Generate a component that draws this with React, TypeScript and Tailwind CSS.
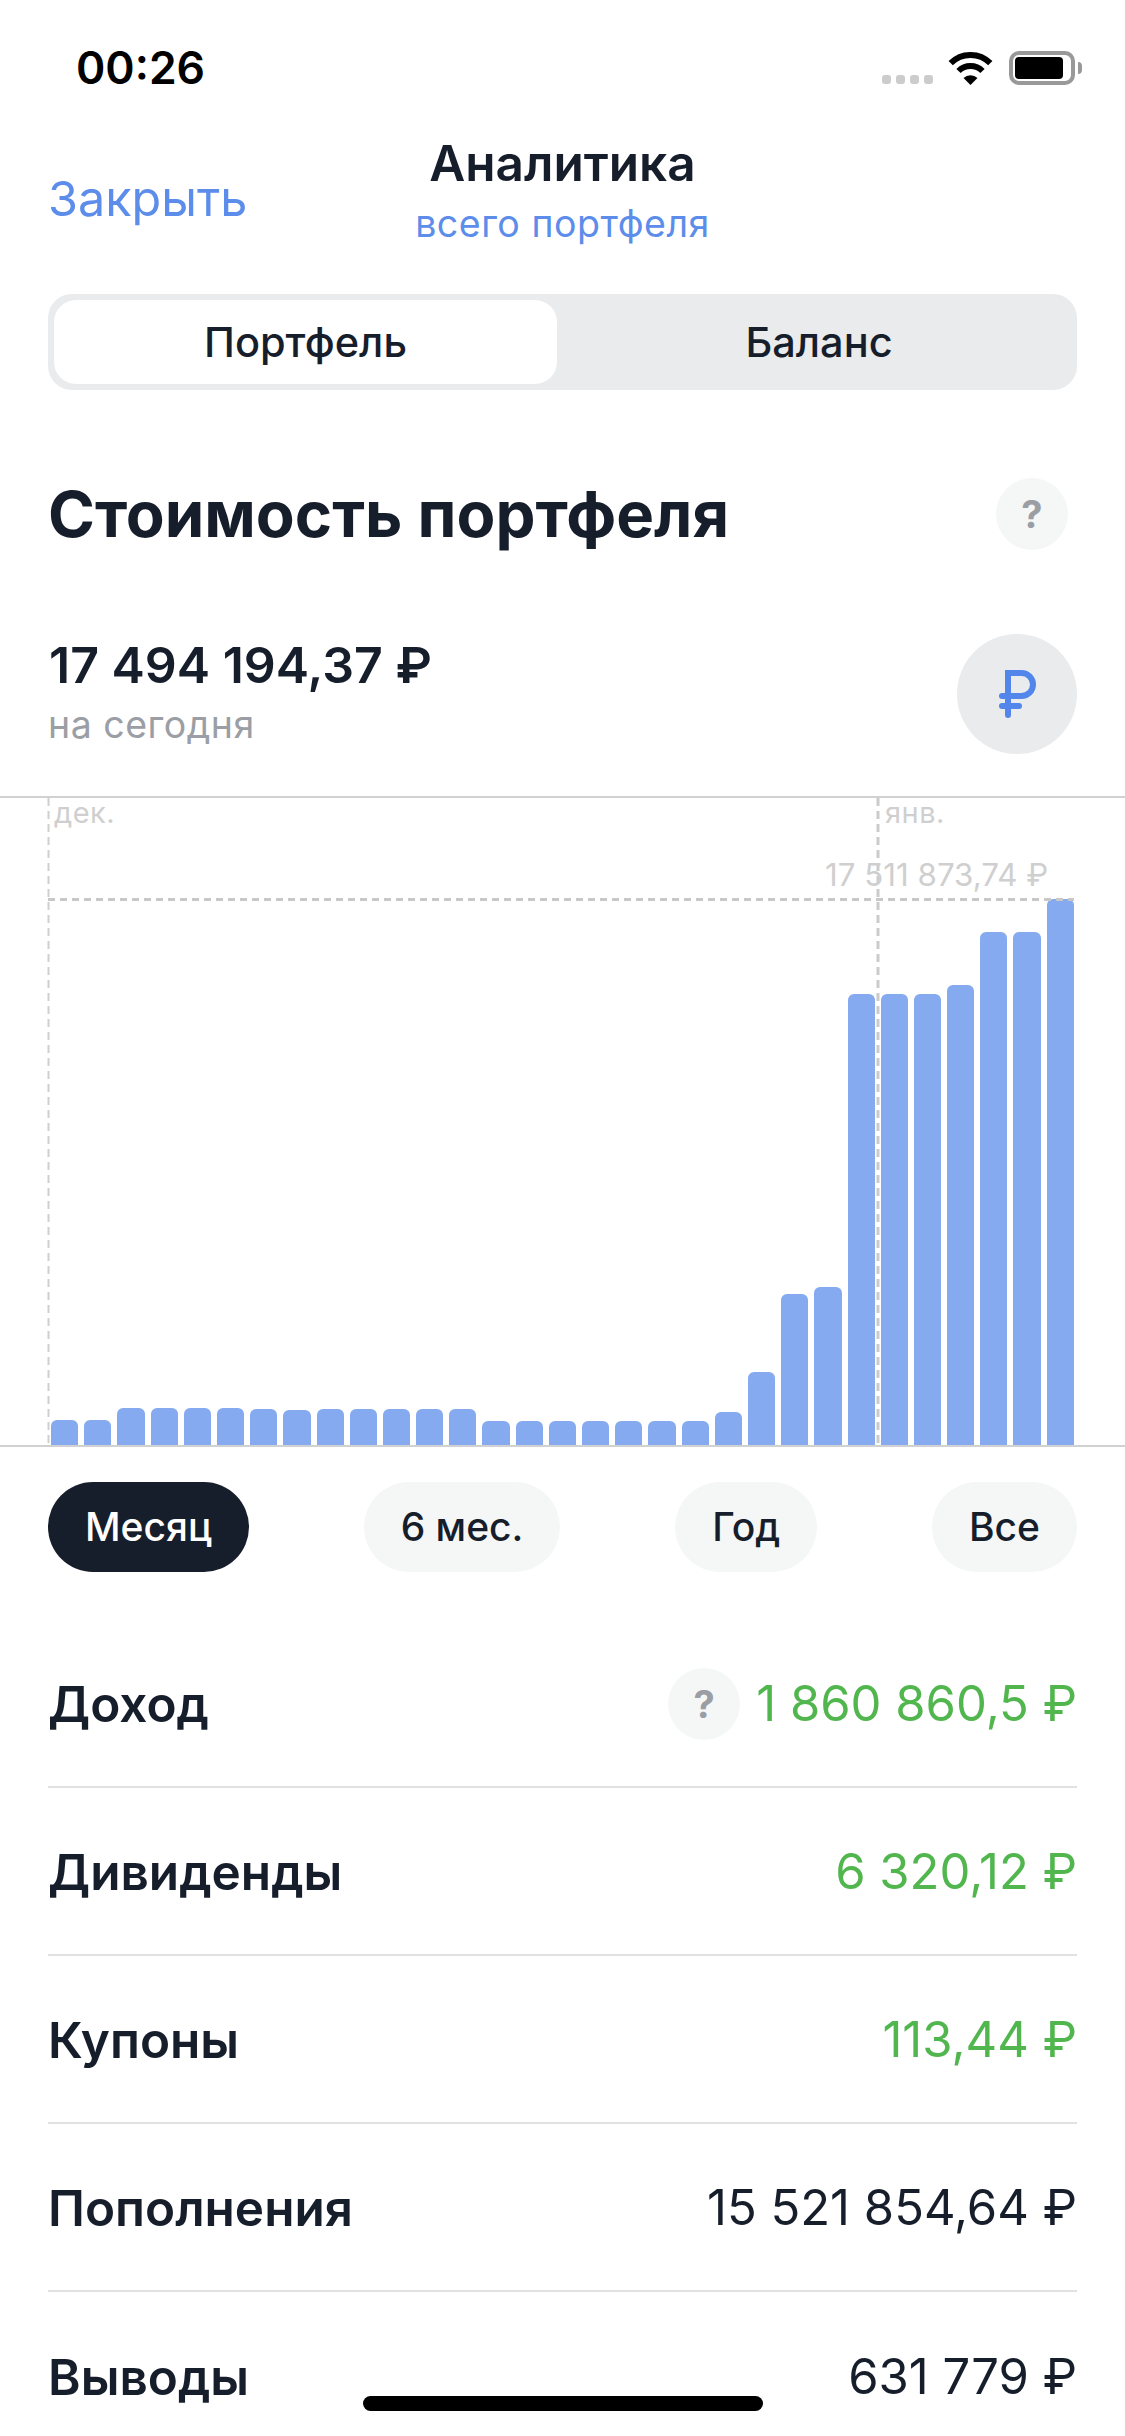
import React from "react";

const barHeights = [
  25, 25, 37, 37, 37, 37, 36, 35, 36, 36, 36, 36, 36, 24, 24, 24, 24, 24, 24,
  24, 33, 73, 151, 158, 451, 451, 451, 460, 513, 513, 546,
];

const ranges = [
  { label: "Месяц", active: true },
  { label: "6 мес.", active: false },
  { label: "Год", active: false },
  { label: "Все", active: false },
];

const rows = [
  { label: "Доход", value: "1 860 860,5 ₽", green: true, help: true },
  { label: "Дивиденды", value: "6 320,12 ₽", green: true, help: false },
  { label: "Купоны", value: "113,44 ₽", green: true, help: false },
  { label: "Пополнения", value: "15 521 854,64 ₽", green: false, help: false },
  { label: "Выводы", value: "631 779 ₽", green: false, help: false },
];

function HelpButton() {
  return (
    <div className="flex h-[72px] w-[72px] items-center justify-center rounded-full bg-[#f5f7f7] text-[38px] font-bold text-[#9b9ea5]">
      ?
    </div>
  );
}

function RubleIcon() {
  return (
    <svg width="44" height="56" viewBox="0 0 44 56" fill="none" stroke="#5286ea" strokeWidth="6" strokeLinecap="round">
      <path d="M13 49V7H26.500A11.500 11.500 0 0 1 26.500 30H7" />
      <path d="M7 40H24" />
    </svg>
  );
}

function StatusIcons() {
  return (
    <div className="flex items-end">
      <div className="flex gap-[5px] pb-[1px]">
        <div className="h-[9px] w-[9px] rounded-[3px] bg-[#cccccc]" />
        <div className="h-[9px] w-[9px] rounded-[3px] bg-[#cccccc]" />
        <div className="h-[9px] w-[9px] rounded-[3px] bg-[#cccccc]" />
        <div className="h-[9px] w-[9px] rounded-[3px] bg-[#cccccc]" />
      </div>
      <svg width="45" height="33" viewBox="0 0 45 33" className="ml-[15px]">
        <path d="M2.7 11.2A28 28 0 0 1 42.3 11.2" fill="none" stroke="#000" strokeWidth="6" />
        <path d="M10.5 19A17 17 0 0 1 34.5 19" fill="none" stroke="#000" strokeWidth="6" />
        <path d="M22.5 33L15.5 26A10 10 0 0 1 29.5 26Z" fill="#000" />
      </svg>
      <div className="ml-[16px] flex items-center">
        <div className="h-[34px] w-[66px] rounded-[10px] border-[4px] border-[#999999] p-[2px]">
          <div className="h-full w-[48px] rounded-[4px] bg-black" />
        </div>
        <div className="ml-[3px] h-[12px] w-[4px] rounded-r-[4px] bg-[#999999]" />
      </div>
    </div>
  );
}

function Chart() {
  return (
    <div className="relative mt-[42px] h-[651px] border-y-2 border-[#d0d1d3]">
      <div className="ml-[51px] flex h-full w-[1023px] items-end gap-[6px]">
        {barHeights.map((h, i) => (
          <div
            key={i}
            className="flex-1 rounded-t-[6px] bg-[#85aaf0]"
            style={{ height: h }}
          />
        ))}
      </div>
      <svg className="absolute left-0 top-0" width="1125" height="647">
        <path d="M48.5 0V647" stroke="#cfcfcf" strokeWidth="2" strokeDasharray="8 5" />
        <path d="M878 0V647" stroke="#cbcbcb" strokeWidth="3" strokeDasharray="8 5" />
        <path d="M48 101.500H1074" stroke="#c8c8c8" strokeWidth="3" strokeDasharray="7 5" />
      </svg>
      <div className="absolute left-[54px] top-[-3px] text-[29px] leading-[36px] tracking-[0.5px] text-[#cfcfcf]">
        дек.
      </div>
      <div className="absolute left-[885px] top-[-3px] text-[29px] leading-[36px] tracking-[0.5px] text-[#cfcfcf]">
        янв.
      </div>
      <div className="absolute left-[825px] top-[58px] text-[31.300px] leading-[38px] text-[#cfcfcf]">
        17 511 873,74 ₽
      </div>
    </div>
  );
}

export default function App() {
  return (
    <div className="relative h-[2436px] w-[1125px] overflow-hidden bg-white font-['Inter',sans-serif] text-[#171e2b]">
      <div className="flex h-[136px] items-center justify-between pl-[76px] pr-[43px]">
        <div className="text-[44.500px] font-semibold leading-none text-black">00:26</div>
        <StatusIcons />
      </div>

      <div className="grid h-[126px] grid-cols-[1fr_auto_1fr] items-center px-[48px]">
        <div className="text-[48.500px] leading-[56px] text-[#5c8dea]">Закрыть</div>
        <div className="flex flex-col items-center self-start">
          <div className="text-[49.500px] font-semibold leading-[54px]">Аналитика</div>
          <div className="mt-[16px] text-[37.500px] leading-[36px] tracking-[0.5px] text-[#5c8dea]">
            всего портфеля
          </div>
        </div>
        <div />
      </div>

      <div className="mx-[48px] mt-[32px] flex h-[96px] rounded-[24px] bg-[#e9ebed] p-[6px] text-[41.500px] font-medium">
        <div className="flex w-[503px] items-center justify-center rounded-[22px] bg-white">Портфель</div>
        <div className="flex flex-1 items-center justify-center pl-[10px]">Баланс</div>
      </div>

      <div className="mt-[88px] flex h-[72px] items-center justify-between pl-[48px] pr-[57px]">
        <h1 className="text-[63.500px] font-bold leading-none">Стоимость портфеля</h1>
        <HelpButton />
      </div>

      <div className="mt-[84px] flex justify-between px-[48px]">
        <div>
          <div className="ml-[1px] text-[50px] font-semibold leading-[62px]">17 494 194,37 ₽</div>
          <div className="mt-[9px] text-[37.500px] leading-[40px] tracking-[0.5px] text-[#9b9ea4]">на сегодня</div>
        </div>
        <div className="flex h-[120px] w-[120px] items-center justify-center rounded-full bg-[#e9ebed]">
          <RubleIcon />
        </div>
      </div>

      <Chart />

      <div className="mx-[48px] mt-[35px] flex justify-between">
        {ranges.map((r) => (
          <div
            key={r.label}
            className={`flex h-[90px] items-center rounded-full px-[37px] text-[39px] font-medium ${
              r.active ? "bg-[#171e2b] text-white" : "bg-[#f5f7f7]"
            }`}
          >
            {r.label}
          </div>
        ))}
      </div>

      <div className="mt-[48px]">
        {rows.map((r, i) => (
          <div
            key={r.label}
            className={`mx-[48px] flex h-[168px] items-center justify-between pt-[2px] ${
              i < rows.length - 1 ? "border-b-2 border-[#e0e1e3]" : ""
            }`}
          >
            <div className="text-[49.500px] font-semibold">{r.label}</div>
            <div className="flex items-center gap-[16px]">
              {r.help && <HelpButton />}
              <div className={`text-[49px] ${r.green ? "text-[#52b64f]" : ""}`}>{r.value}</div>
            </div>
          </div>
        ))}
      </div>

      <div className="absolute bottom-[25px] left-[363px] h-[15px] w-[400px] rounded-full bg-black" />
    </div>
  );
}
